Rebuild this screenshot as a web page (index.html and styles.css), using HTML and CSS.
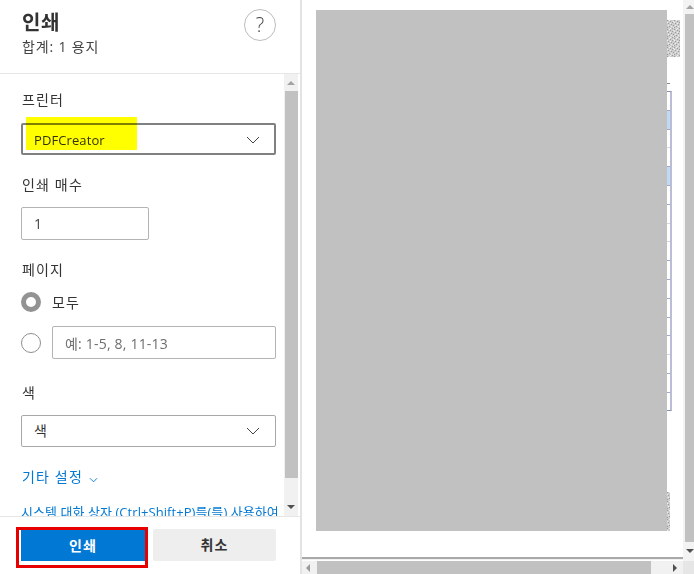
FILE: index.html
```html
<!DOCTYPE html>
<html lang="ko">
<head>
<meta charset="utf-8">
<title>인쇄</title>
<link rel="stylesheet" href="styles.css">
</head>
<body>
<div class="app">
  <aside class="panel">
    <header class="head">
      <div>
        <h1 class="title">인쇄</h1>
        <p class="total">합계: 1 용지</p>
      </div>
      <button class="help" type="button">?</button>
    </header>
    <div class="scroller">
      <div class="form">
        <div class="label first">프린터</div>
        <div class="select strong">
          <span class="value latin">PDFCreator</span>
          <svg class="chev" viewBox="0 0 14 8" width="14" height="8"><path d="M1 1l6 6 6-6" fill="none" stroke="#444" stroke-width="1"/></svg>
          <span class="marker"></span>
        </div>
        <div class="label copies">인쇄 매수</div>
        <div class="field short">1</div>
        <div class="label pages">페이지</div>
        <div class="radio-row all"><span class="radio on"></span><span class="radio-text">모두</span></div>
        <div class="radio-row range"><span class="radio"></span><div class="field grow hint">예: 1-5, 8, 11-13</div></div>
        <div class="label color">색</div>
        <div class="select">
          <span class="value raised">색</span>
          <svg class="chev" viewBox="0 0 14 8" width="14" height="8"><path d="M1 1l6 6 6-6" fill="none" stroke="#444" stroke-width="1"/></svg>
        </div>
        <div class="more">기타 설정 <svg viewBox="0 0 10 6" width="9" height="6"><path d="M1 1l4 4 4-4" fill="none" stroke="#0078d4" stroke-width="1"/></svg></div>
        <div class="system">시스템 대화 상자 (Ctrl+Shift+P)를(를) 사용하여 인쇄</div>
      </div>
      <div class="vbar">
        <span class="arrow up"></span>
        <span class="thumb"></span>
        <span class="arrow down"></span>
      </div>
    </div>
    <footer class="foot">
      <button class="btn primary" type="button">인쇄</button>
      <button class="btn" type="button">취소</button>
    </footer>
  </aside>
  <main class="preview">
    <svg class="defs" width="1" height="1"><defs><pattern id="grain" width="7" height="9" patternUnits="userSpaceOnUse"><rect width="7" height="9" fill="#cdcdcd"/><path d="M0 0h1v1H0zM3 1h1v1H3zM5 2h1v1H5zM1 3h1v1H1zM4 4h1v1H4zM6 5h1v1H6zM2 6h1v1H2zM0 7h1v1H0zM5 8h1v1H5z" fill="#9c9c9c"/><path d="M2 0h1v1H2zM6 1h1v1H6zM0 2h1v1H0zM3 3h1v1H3zM1 5h1v1H1zM4 6h1v1H4zM3 8h1v1H3zM6 7h1v1H6z" fill="#eeeeee"/></pattern></defs></svg>
    <div class="view">
      <div class="page-wrap">
        <div class="page">
          <svg class="noise top" width="13" height="37"><rect width="13" height="37" fill="url(#grain)"/></svg>
          <div class="dash"></div>
          <div class="sheet">
            <div class="row"></div><div class="row blue"></div><div class="row faint"></div><div class="row"></div>
            <div class="row blue"></div><div class="row"></div><div class="row faint"></div><div class="row faint"></div>
            <div class="row"></div><div class="row"></div><div class="row"></div><div class="row"></div>
            <div class="row"></div><div class="row faint"></div><div class="row"></div><div class="row"></div><div class="row last"></div>
          </div>
          <svg class="noise bottom" width="3" height="39"><rect width="3" height="39" fill="url(#grain)"/></svg>
          <div class="mask"></div>
        </div>
      </div>
      <div class="vbar outer">
        <span class="arrow up"></span>
        <span class="thumb"></span>
        <span class="arrow down"></span>
      </div>
    </div>
    <div class="hbar">
      <span class="arrow left"></span>
      <span class="hthumb"></span>
      <span class="arrow right"></span>
      <span class="corner"></span>
    </div>
  </main>
</div>
</body>
</html>
```
FILE: styles.css
```css
* { box-sizing: border-box; }
html, body { margin: 0; height: 100%; overflow: hidden; background: #fff; }
body { font-family: "Open Sans", "Noto Sans CJK KR", sans-serif; color: #333; }
.app { display: flex; width: 694px; height: 574px; }
.defs { position: absolute; }

.panel { width: 302px; height: 574px; display: flex; flex-direction: column; border-right: 2px solid #e3e3e3; flex: none; }
.head { height: 74px; padding: 9px 24px 0 22px; display: flex; justify-content: space-between; align-items: flex-start; border-bottom: 1px solid #e6e6e6; flex: none; }
.title { margin: 0; font-size: 20px; line-height: 28px; font-weight: 700; color: #333; letter-spacing: .7px; }
.total { margin: 0; font-size: 14px; line-height: 20px; color: #444; letter-spacing: .85px; }
.help { width: 32px; height: 32px; padding: 0; border: 1px solid #bdbdbd; border-radius: 50%; background: #fff; font: 300 20px/28px "Open Sans", sans-serif; color: #444; }

.scroller { height: 442px; display: flex; flex: none; overflow: hidden; }
.form { width: 284px; padding-left: 21px; overflow: hidden; flex: none; }
.label { font-size: 14px; line-height: 20px; color: #333; letter-spacing: 1.15px; padding-left: 1px; }
.label.first { margin-top: 16px; margin-bottom: 13px; }
.label.copies { margin-top: 20px; margin-bottom: 12px; }
.label.pages { margin-top: 20px; margin-bottom: 12px; }
.label.color { margin-top: 24px; margin-bottom: 12px; }

.select { position: relative; width: 255px; height: 32px; border: 1px solid #a8a8a8; border-radius: 2px; display: flex; align-items: center; justify-content: space-between; padding: 0 15px 0 12px; font-size: 13px; color: #333; background: #fff; }
.select.strong { border: 2px solid #808080; padding: 1px 14px 0 11px; }
.latin { letter-spacing: .1px; }
.raised { font-size: 14px; margin-bottom: 3px; }
.marker { position: absolute; left: 3px; top: -8px; width: 111px; height: 33px; background: #ffff00; mix-blend-mode: multiply; }
.field { height: 33px; border: 1px solid #b4b4b4; border-radius: 2px; display: flex; align-items: center; padding-left: 12px; font-size: 14px; color: #444; background: #fff; }
.field.short { width: 128px; }
.field.grow { width: 224px; }
.hint { color: #6e6e6e; font-size: 14px; letter-spacing: .2px; }

.radio-row { display: flex; align-items: center; width: 255px; }
.radio-row.all { height: 20px; }
.radio-row.range { margin-top: 14px; justify-content: space-between; }
.radio { width: 20px; height: 20px; border: 1px solid #8f8f8f; border-radius: 50%; background: #fff; flex: none; }
.radio.on { border: 5px solid #939393; }
.radio-text { margin-left: 11px; font-size: 14px; color: #333; letter-spacing: 1.2px; }

.more { margin-top: 20px; padding-left: 1px; font-size: 14px; line-height: 20px; color: #0078d4; letter-spacing: 1.15px; }
.more svg { margin-left: 1px; vertical-align: -1px; }
.system { margin-top: 16px; width: 256px; overflow: hidden; white-space: nowrap; font-size: 13px; line-height: 18px; color: #0078d4; letter-spacing: .06px; }

.vbar { width: 14px; margin-right: 2px; background: #f1f1f1; display: flex; flex-direction: column; align-items: center; flex: none; }
.thumb { flex: 1; width: 13px; background: #c1c1c1; display: block; align-self: flex-end; }
.arrow { display: block; flex: none; width: 0; height: 0; border-style: solid; border-color: transparent; }
.vbar .up { margin: 7px 0 6px; border-width: 0 4px 4px; border-bottom-color: #a3a3a3; }
.vbar .down { margin: 27px 0 7px; border-width: 4px 4px 0; border-top-color: #505050; }

.foot { height: 58px; flex: none; border-top: 1px solid #e6e6e6; padding: 12px 24px 0 21px; display: flex; justify-content: space-between; align-items: flex-start; }
.btn { position: relative; width: 123px; height: 32px; padding: 0; border: 0; border-radius: 2px; background: #eeeeee; font: 700 14px/32px "Open Sans", "Noto Sans CJK KR", sans-serif; letter-spacing: 1px; color: #333; }
.btn.primary { width: 124px; background: #0078d4; color: #fff; border-radius: 0; height: 31px; margin-top: 1px; line-height: 30px; }
.btn.primary::after { content: ""; position: absolute; left: -5px; right: -3px; top: -3px; bottom: -7px; border: 3px solid #e60000; }

.preview { flex: 1; min-width: 0; display: flex; flex-direction: column; height: 574px; }
.view { height: 561px; display: flex; flex: none; }
.page-wrap { width: 381px; flex: none; overflow: hidden; }
.page { position: relative; width: 381px; height: 557px; background: #fff; box-shadow: 0 1px 1px 1px #a9a9a9; padding: 20px 0 0 365px; }
.noise { display: block; }
.noise.bottom { margin-top: 81px; }
.dash { width: 3px; height: 1px; margin-top: 26px; background: #888; }
.sheet { margin-top: 7px; width: 4.5px; height: 320px; border-right: 2px solid #b9bdd8; border-top: 1px solid #8d90ad; border-bottom: 1px solid #8d90ad; }
.row { height: 18.8px; border-bottom: 1px solid #a6a8c2; }
.row.blue { background: #c0daf5; }
.row.faint { border-bottom-color: #d5d6e4; }
.row.last { border-bottom: 0; }
.mask { position: absolute; left: 14px; top: 10px; width: 351px; height: 521px; background: #c1c1c1; }

.vbar.outer { width: 11px; margin: 0; background: #f3f3f3; }
.outer .up { margin: 5px 0 5px 2px; }
.outer .thumb { width: 9px; }
.outer .down { margin: 7px 0 8px 2px; border-width: 4px 4px 0; }

.hbar { height: 13px; display: flex; align-items: center; background: #f1f1f1; flex: none; }
.hbar .left { margin-left: 4px; border-width: 4px 4px 4px 0; border-right-color: #999; }
.hthumb { width: 334px; height: 13px; background: #c1c1c1; margin-left: 7px; }
.hbar .right { margin-left: 22px; border-width: 4px 0 4px 4px; border-left-color: #505050; }
.corner { margin-left: auto; width: 11px; height: 13px; background: #e6e6e6; }
```
